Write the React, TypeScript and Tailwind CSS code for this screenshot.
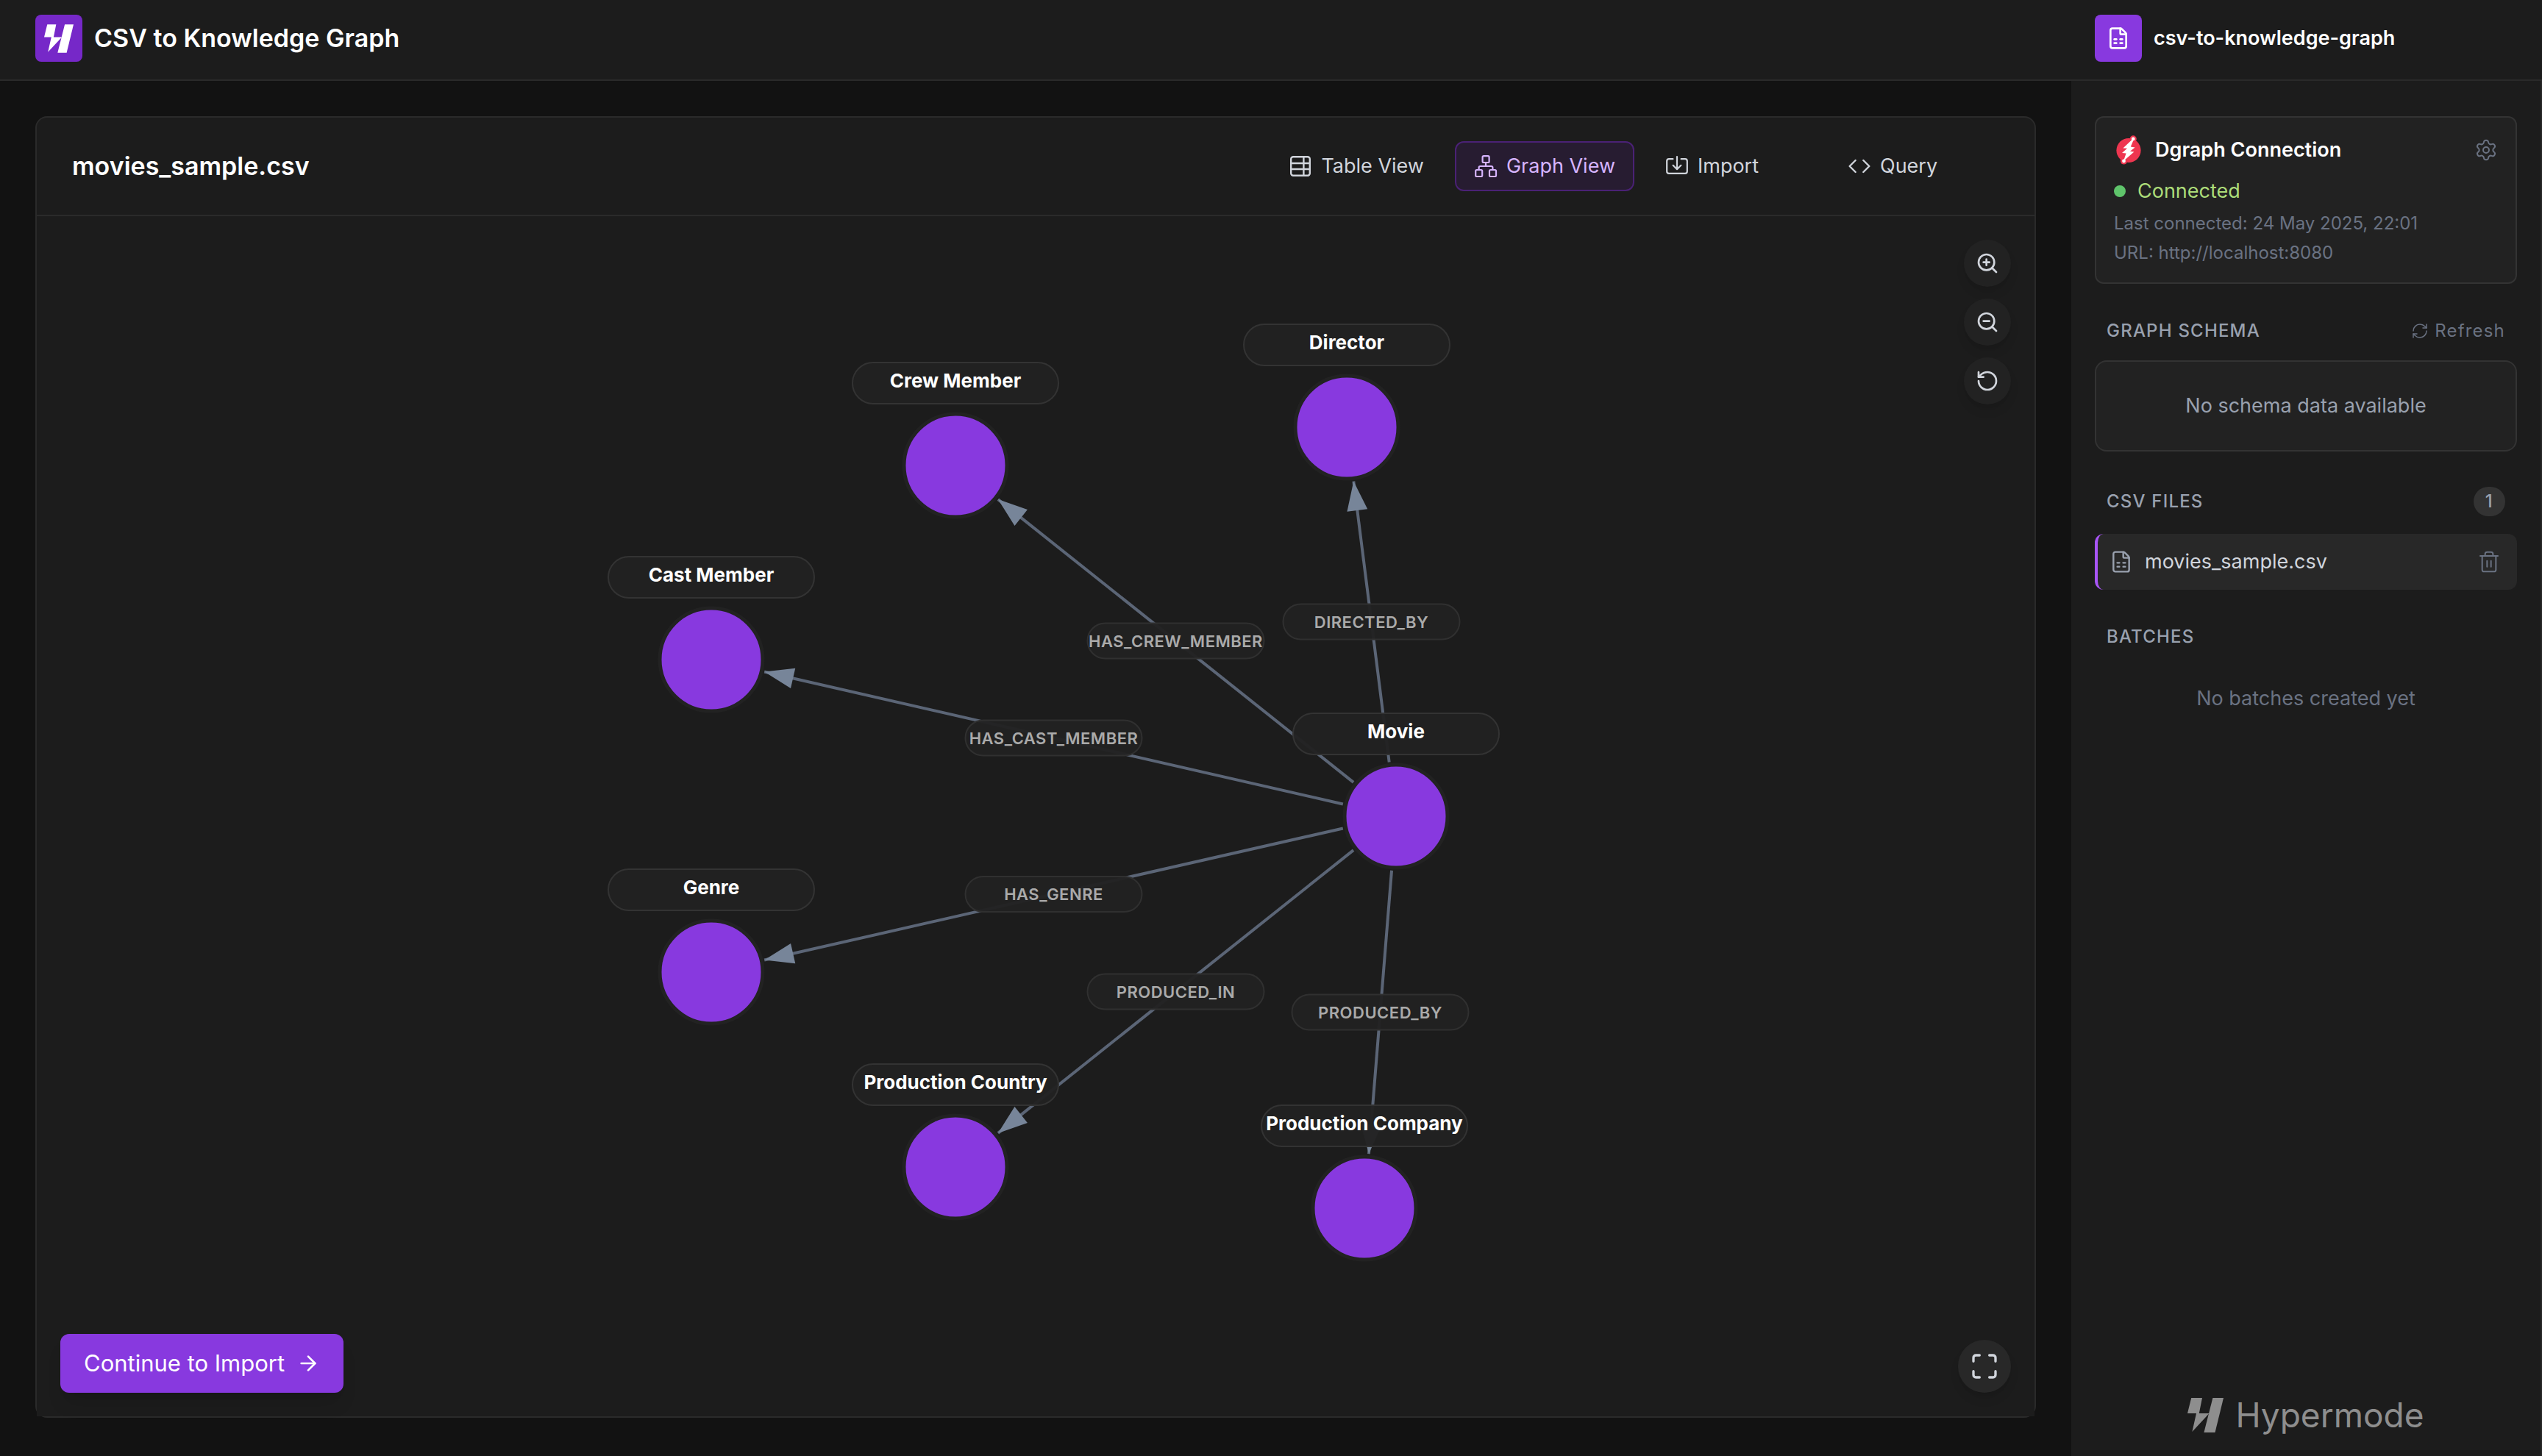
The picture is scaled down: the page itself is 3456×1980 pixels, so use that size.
import {
  ArrowRight,
  Code,
  FileSpreadsheet,
  Maximize,
  RefreshCw,
  RotateCcw,
  Settings,
  Trash2,
  ZoomIn,
  ZoomOut,
} from 'lucide-react';

type GraphNode = { id: string; label: string; x: number; y: number };
type GraphEdge = { label: string; target: string };

const NODE_RADIUS = 70;
const EDGE_GAP = 74;
const ARROW_LENGTH = 40;

const nodes: GraphNode[] = [
  { id: 'movie', label: 'Movie', x: 1848, y: 816 },
  { id: 'director', label: 'Director', x: 1781, y: 287 },
  { id: 'crew', label: 'Crew Member', x: 1249, y: 339 },
  { id: 'cast', label: 'Cast Member', x: 917, y: 603 },
  { id: 'genre', label: 'Genre', x: 917, y: 1028 },
  { id: 'country', label: 'Production Country', x: 1249, y: 1293 },
  { id: 'company', label: 'Production Company', x: 1805, y: 1349 },
];

const edges: GraphEdge[] = [
  { label: 'DIRECTED_BY', target: 'director' },
  { label: 'HAS_CREW_MEMBER', target: 'crew' },
  { label: 'HAS_CAST_MEMBER', target: 'cast' },
  { label: 'HAS_GENRE', target: 'genre' },
  { label: 'PRODUCED_IN', target: 'country' },
  { label: 'PRODUCED_BY', target: 'company' },
];

type IconProps = { className?: string };

const HypermodeMark = ({ className }: IconProps) => (
  <svg viewBox="0 0 49 47" className={className} fill="currentColor" aria-hidden="true">
    <path d="M5.2 0H20L15.8 21H29.6L6.4 46L12 21H0Z" />
    <path d="M34.4 0H49L37.5 47H22.4Z" />
  </svg>
);

const DgraphLogo = ({ className }: IconProps) => (
  <svg viewBox="0 0 40 40" className={className} aria-hidden="true">
    <g fill="#ee3650">
      <circle cx="20" cy="20.5" r="16.6" />
      <circle cx="26.2" cy="4.9" r="4.6" />
      <circle cx="13.5" cy="35" r="4.6" />
    </g>
    <g fill="#fff">
      <circle cx="26.2" cy="4.9" r="2.4" />
      <circle cx="13.5" cy="35" r="2.4" />
      <path d="M25.6 5L12.4 17.4L18 17.8L11 24L16.6 24.6L13 35L27.4 22.4L22 21.8L28.6 16.6L22.8 15.4L27 5.4Z" />
    </g>
  </svg>
);

const TableIcon = ({ className }: IconProps) => (
  <svg viewBox="0 0 32 32" className={className} fill="none" stroke="currentColor" strokeWidth="2.4" aria-hidden="true">
    <rect x="3.2" y="3.2" width="25.6" height="25.6" rx="3" />
    <path d="M3 12H29M3 20H29M20.4 3V29" />
  </svg>
);

const GraphIcon = ({ className }: IconProps) => (
  <svg viewBox="0 0 32 32" className={className} fill="none" stroke="currentColor" strokeWidth="2.2" aria-hidden="true">
    <rect x="11.6" y="2.2" width="9" height="8.8" rx="1.6" />
    <rect x="2.2" y="21" width="9" height="9" rx="1.6" />
    <rect x="21" y="21" width="9" height="9" rx="1.6" />
    <path d="M16 11V16M6.6 21V18Q6.6 16 8.6 16H23.4Q25.4 16 25.4 18V21" />
  </svg>
);

const ImportIcon = ({ className }: IconProps) => (
  <svg
    viewBox="0 0 32 32"
    className={className}
    fill="none"
    stroke="currentColor"
    strokeWidth="2.2"
    strokeLinecap="round"
    strokeLinejoin="round"
    aria-hidden="true"
  >
    <path d="M10.4 6.2H5Q2.2 6.2 2.2 9V23Q2.2 25.8 5 25.8H27Q29.8 25.8 29.8 23V9Q29.8 6.2 27 6.2H21.6" />
    <path d="M16 3.2V20M10.6 14.8L16 20.2L21.4 14.8" />
  </svg>
);

const tabs = [
  { label: 'Table View', icon: TableIcon, active: false },
  { label: 'Graph View', icon: GraphIcon, active: true },
  { label: 'Import', icon: ImportIcon, active: false },
  { label: 'Query', icon: Code, active: false },
];

const zoomControls = [
  { label: 'Zoom in', icon: ZoomIn },
  { label: 'Zoom out', icon: ZoomOut },
  { label: 'Reset view', icon: RotateCcw },
];

const Edge = ({ source, target }: { source: GraphNode; target: GraphNode }) => {
  const length = Math.hypot(target.x - source.x, target.y - source.y);
  const ux = (target.x - source.x) / length;
  const uy = (target.y - source.y) / length;
  const tipX = target.x - ux * EDGE_GAP;
  const tipY = target.y - uy * EDGE_GAP;
  const baseX = tipX - ux * ARROW_LENGTH;
  const baseY = tipY - uy * ARROW_LENGTH;

  return (
    <g>
      <line
        x1={source.x + ux * EDGE_GAP}
        y1={source.y + uy * EDGE_GAP}
        x2={tipX}
        y2={tipY}
        stroke="#5b6576"
        strokeWidth="4"
      />
      <polygon
        points={`${tipX},${tipY} ${baseX - uy * 14},${baseY + ux * 14} ${baseX + uy * 14},${baseY - ux * 14}`}
        fill="#778599"
      />
    </g>
  );
};

const KnowledgeGraph = () => {
  const byId = (id: string) => nodes.find((node) => node.id === id)!;
  const movie = byId('movie');

  return (
    <svg viewBox="0 0 2716 1632" className="absolute inset-0 w-full h-full" role="img" aria-label="Graph model">
      {edges.map((edge) => (
        <Edge key={edge.label} source={movie} target={byId(edge.target)} />
      ))}

      {/* Relationship labels */}
      {edges.map((edge) => {
        const target = byId(edge.target);
        const x = (movie.x + target.x) / 2;
        const y = (movie.y + target.y) / 2;
        return (
          <g key={edge.label}>
            <rect x={x - 120} y={y - 24} width="240" height="48" rx="24" fill="#222222" fillOpacity="0.97" stroke="#303030" strokeWidth="2" />
            <text x={x} y={y + 8} textAnchor="middle" className="text-[22px] font-semibold tracking-[0.5px] fill-[#aaaaaa]">
              {edge.label}
            </text>
          </g>
        );
      })}

      {/* Entities */}
      {nodes.map((node) => (
        <g key={node.id}>
          <circle cx={node.x} cy={node.y} r={NODE_RADIUS} fill="#8839df" stroke="#222222" strokeWidth="5" />
          <rect x={node.x - 140} y={node.y - 140} width="280" height="56" rx="28" fill="#222222" fillOpacity="0.97" stroke="#333333" strokeWidth="2" />
          <text x={node.x} y={node.y - 106} textAnchor="middle" className="text-[26px] font-bold fill-white">
            {node.label}
          </text>
        </g>
      ))}
    </svg>
  );
};

const ConnectionCard = () => (
  <section className="p-6 bg-[#222222] border-2 border-[#333333] rounded-xl">
    <div className="flex items-center gap-4">
      <DgraphLogo className="size-10" />
      <h2 className="flex-1 text-[27px] leading-10 font-semibold text-white">Dgraph Connection</h2>
      <button type="button" aria-label="Connection settings" className="text-gray-500">
        <Settings className="size-8" strokeWidth={1.5} />
      </button>
    </div>
    <div className="mt-4 flex items-center gap-4">
      <span className="size-4 rounded-full bg-[#5fc46b]" />
      <span className="text-[27px] leading-10 text-[#acdc79]">Connected</span>
    </div>
    <p className="mt-2 text-2xl text-gray-500">Last connected: 24 May 2025, 22:01</p>
    <p className="mt-2 text-2xl text-gray-500">URL: http://localhost:8080</p>
  </section>
);

const Sidebar = () => (
  <aside className="w-[640px] shrink-0 flex flex-col pt-12 pl-8 pr-8 pb-8 bg-[#1c1c1c] border-r-2 border-[#282828]">
    <ConnectionCard />

    {/* Schema */}
    <section className="mt-12">
      <div className="flex items-center justify-between px-4 text-2xl tracking-wider">
        <h3 className="font-medium text-gray-400">GRAPH SCHEMA</h3>
        <button type="button" className="flex items-center gap-2 tracking-wider text-gray-500">
          <RefreshCw className="size-6" strokeWidth={1.5} />
          Refresh
        </button>
      </div>
      <div className="mt-6 p-10 bg-[#222222] border-2 border-[#333333] rounded-2xl text-center text-[27px] leading-10 text-gray-400">
        No schema data available
      </div>
    </section>

    {/* Files */}
    <section className="mt-12">
      <div className="flex items-center justify-between px-4 text-2xl tracking-wider text-gray-400">
        <h3 className="font-medium">CSV FILES</h3>
        <span className="px-4 py-1 rounded-full bg-[#333333] font-medium">1</span>
      </div>
      <div className="mt-6 h-[76px] flex items-center gap-4 pl-4 pr-[22px] bg-[#282828] border-l-4 border-[#a855f7] rounded-xl">
        <FileSpreadsheet className="size-8 text-gray-400" strokeWidth={1.8} />
        <a href="#movies_sample" className="flex-1 text-[27px] leading-10 text-gray-300">
          movies_sample.csv
        </a>
        <button type="button" aria-label="Delete file" className="text-gray-500">
          <Trash2 className="size-8" strokeWidth={1.5} />
        </button>
      </div>
    </section>

    {/* Batches */}
    <section className="mt-12">
      <h3 className="px-4 text-2xl tracking-wider font-medium text-gray-400">BATCHES</h3>
      <p className="mt-12 text-center text-[27px] leading-10 text-gray-500">No batches created yet</p>
    </section>

    <div className="mt-auto flex items-center justify-center gap-4 text-[#8e8e8e]">
      <HypermodeMark className="w-[49px] h-[47px]" />
      <span className="text-[46px] leading-12">Hypermode</span>
    </div>
  </aside>
);

export default function App() {
  return (
    <div className="min-h-screen flex flex-col bg-[#121212] font-['Inter',sans-serif]">
      {/* Top bar */}
      <header className="flex bg-[#1c1c1c] border-b-2 border-[#2a2a2a]">
        <div className="flex-1 flex items-center gap-4 px-12 pt-5 pb-6">
          <div className="size-16 flex items-center justify-center rounded-lg bg-[#7628c8] text-white">
            <HypermodeMark className="w-10 h-[39px]" />
          </div>
          <h1 className="text-[34px] leading-10 font-semibold text-white">CSV to Knowledge Graph</h1>
        </div>
        <div className="w-[640px] flex items-center gap-4 px-8 pt-5 pb-6">
          <div className="size-16 flex items-center justify-center rounded-lg bg-[#8839df] text-white">
            <FileSpreadsheet className="size-8" />
          </div>
          <span className="text-[27px] leading-10 font-semibold text-white">csv-to-knowledge-graph</span>
        </div>
      </header>

      <div className="flex-1 flex">
        <main className="flex-1 flex flex-col px-12 pt-12 pb-13">
          <div className="flex-1 flex flex-col border-2 border-[#2a2a2a] rounded-2xl bg-[#1c1c1c]">
            {/* File header */}
            <div className="flex items-center justify-between px-12 py-8 border-b-2 border-[#2a2a2a]">
              <h2 className="text-[34px] leading-10 font-semibold text-white">movies_sample.csv</h2>
              <nav className="flex gap-4">
                {tabs.map(({ label, icon: Icon, active }) => (
                  <button
                    key={label}
                    type="button"
                    className={`flex items-center gap-3 min-w-[232px] h-[68px] px-6 border-2 rounded-xl text-[27px] leading-10 ${
                      active ? 'bg-[#271c31] border-[#4a2175] text-[#d6b4fe]' : 'border-transparent text-gray-300'
                    }`}
                  >
                    <Icon className="size-8" strokeWidth={1.8} />
                    {label}
                  </button>
                ))}
              </nav>
            </div>

            {/* Graph canvas */}
            <div className="relative flex-1 bg-[#1c1c1c]">
              <KnowledgeGraph />

              <div className="absolute top-8 right-8 flex flex-col gap-4">
                {zoomControls.map(({ label, icon: Icon }) => (
                  <button
                    key={label}
                    type="button"
                    aria-label={label}
                    className="size-16 flex items-center justify-center rounded-full bg-[#222222] text-gray-300 shadow-lg"
                  >
                    <Icon className="size-8" />
                  </button>
                ))}
              </div>

              <button
                type="button"
                className="absolute bottom-8 left-8 h-20 flex items-center gap-4 px-8 rounded-xl bg-[#8839df] text-[31px] text-white shadow-xl"
              >
                Continue to Import
                <ArrowRight className="size-8" />
              </button>

              <button
                type="button"
                aria-label="Fullscreen"
                className="absolute bottom-8 right-8 size-18 flex items-center justify-center rounded-full bg-[#282828] text-gray-300 shadow-lg"
              >
                <Maximize className="size-10" />
              </button>
            </div>
          </div>
        </main>

        <Sidebar />
      </div>
    </div>
  );
}
